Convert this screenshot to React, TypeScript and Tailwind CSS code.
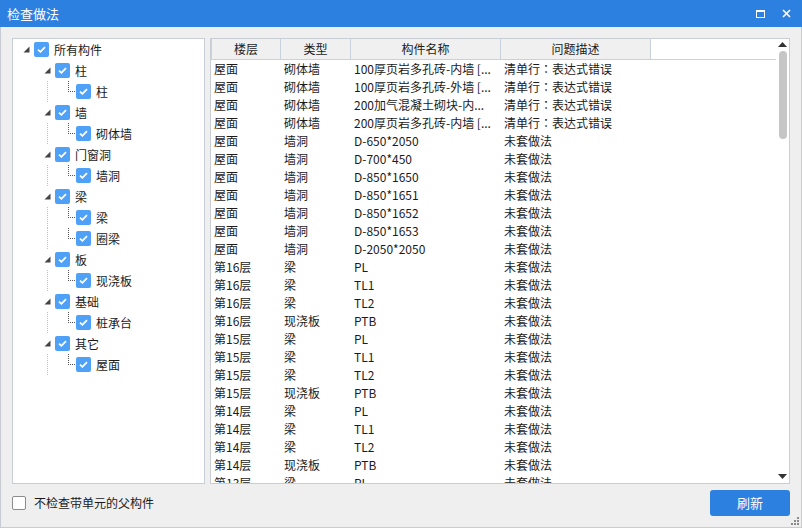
const FONT = '"Noto Sans CJK SC", "Noto Sans", sans-serif'

type Node = { label: string; children?: Node[] }

const tree: Node[] = [
  { label: '柱', children: [{ label: '柱' }] },
  { label: '墙', children: [{ label: '砌体墙' }] },
  { label: '门窗洞', children: [{ label: '墙洞' }] },
  { label: '梁', children: [{ label: '梁' }, { label: '圈梁' }] },
  { label: '板', children: [{ label: '现浇板' }] },
  { label: '基础', children: [{ label: '桩承台' }] },
  { label: '其它', children: [{ label: '屋面' }] },
]

const rows: [string, string, string, string][] = [
  ['屋面', '砌体墙', '100厚页岩多孔砖-内墙 [...', '清单行：表达式错误'],
  ['屋面', '砌体墙', '100厚页岩多孔砖-外墙 [...', '清单行：表达式错误'],
  ['屋面', '砌体墙', '200加气混凝土砌块-内...', '清单行：表达式错误'],
  ['屋面', '砌体墙', '200厚页岩多孔砖-内墙 [...', '清单行：表达式错误'],
  ['屋面', '墙洞', 'D-650*2050', '未套做法'],
  ['屋面', '墙洞', 'D-700*450', '未套做法'],
  ['屋面', '墙洞', 'D-850*1650', '未套做法'],
  ['屋面', '墙洞', 'D-850*1651', '未套做法'],
  ['屋面', '墙洞', 'D-850*1652', '未套做法'],
  ['屋面', '墙洞', 'D-850*1653', '未套做法'],
  ['屋面', '墙洞', 'D-2050*2050', '未套做法'],
  ['第16层', '梁', 'PL', '未套做法'],
  ['第16层', '梁', 'TL1', '未套做法'],
  ['第16层', '梁', 'TL2', '未套做法'],
  ['第16层', '现浇板', 'PTB', '未套做法'],
  ['第15层', '梁', 'PL', '未套做法'],
  ['第15层', '梁', 'TL1', '未套做法'],
  ['第15层', '梁', 'TL2', '未套做法'],
  ['第15层', '现浇板', 'PTB', '未套做法'],
  ['第14层', '梁', 'PL', '未套做法'],
  ['第14层', '梁', 'TL1', '未套做法'],
  ['第14层', '梁', 'TL2', '未套做法'],
  ['第14层', '现浇板', 'PTB', '未套做法'],
  ['第13层', '梁', 'PL', '未套做法'],
]

function Check() {
  return (
    <span className="flex h-[15px] w-[15px] shrink-0 items-center justify-center rounded-[2px] bg-[#4ea1f6]">
      <svg width="9" height="7" viewBox="0 0 9 7">
        <path d="M1 3.6 L3.4 5.8 L8 1.2" fill="none" stroke="white" strokeWidth="1.8" />
      </svg>
    </span>
  )
}

function Arrow() {
  return (
    <svg width="7" height="7" viewBox="0 0 7 7" className="shrink-0">
      <path d="M6.5 0.5 L6.5 6.5 L0.5 6.5 Z" fill="#444" />
    </svg>
  )
}

// full-width colon drawn centred, as the original UI font does
function Cell({ text }: { text: string }) {
  const at = text.indexOf('：')
  if (at < 0) return <>{text}</>
  return (
    <>
      {text.slice(0, at)}
      <span style={{ fontFamily: '"Noto Sans CJK TC", sans-serif' }}>：</span>
      {text.slice(at + 1)}
    </>
  )
}

function TreePanel() {
  return (
    <div className="w-[193px] overflow-hidden border border-[#c9cdd4] bg-white text-[12px] text-[#1b1b1b]">
      <div className="flex h-[21px] items-center pl-[10px]">
        <Arrow />
        <span className="ml-[4px]"><Check /></span>
        <span className="ml-[5px]">所有构件</span>
      </div>
      {tree.map((g) => (
        <div key={g.label}>
          <div className="flex h-[21px] items-center pl-[31px]">
            <Arrow />
            <span className="ml-[4px]"><Check /></span>
            <span className="ml-[5px]">{g.label}</span>
          </div>
          {g.children?.map((c, i) => (
            <div key={c.label + i} className="relative flex h-[21px] items-center pl-[63px]">
              <span className="absolute left-[34px] top-0 h-[21px] border-l border-dotted border-[#b8c0cc]" />
              <span className="absolute left-[55px] top-0 h-[11px] w-[7px] border-b border-l border-dotted border-[#555]" />
              <Check />
              <span className="ml-[5px]">{c.label}</span>
            </div>
          ))}
        </div>
      ))}
    </div>
  )
}

function TablePanel() {
  const cols = ['w-[70px]', 'w-[70px]', 'w-[150px]', 'w-[150px]']
  return (
    <div className="relative flex flex-1 overflow-hidden border border-[#c9cdd4] bg-white text-[12px] text-[#1b1b1b]">
      <div className="flex-1 overflow-hidden">
        <div className="flex h-[21px] border-b border-[#c9d1dd]">
          {['楼层', '类型', '构件名称', '问题描述'].map((h, i) => (
            <div
              key={h}
              className={`${cols[i]} flex items-center justify-center border-r border-[#c9d1dd] bg-[#f0f0f0] ${i === 0 ? 'border-l' : ''}`}
            >
              {h}
            </div>
          ))}
        </div>
        {rows.map((r, ri) => (
          <div key={ri} className="flex h-[18px] items-center">
            {r.map((c, i) => (
              <div key={i} className={`${cols[i]} truncate whitespace-nowrap pl-[3px]`}>
                <Cell text={c} />
              </div>
            ))}
          </div>
        ))}
      </div>
      <div className="flex w-[13px] flex-col items-center py-[2px]">
        <svg width="9" height="5" viewBox="0 0 9 5" className="mt-[1px]">
          <path d="M0 5 L4.5 0 L9 5 Z" fill="#333" />
        </svg>
        <div className="mt-[4px] h-[88px] w-[8px] rounded-full bg-[#c6c6c6]" />
        <div className="flex-1" />
        <svg width="9" height="5" viewBox="0 0 9 5" className="mb-[2px]">
          <path d="M0 0 L9 0 L4.5 5 Z" fill="#333" />
        </svg>
      </div>
    </div>
  )
}

export default function App() {
  return (
    <div className="flex h-[528px] w-[802px] flex-col" style={{ fontFamily: FONT }}>
      <div className="flex h-[27px] items-center justify-between bg-[#2c80e0] pl-[7px] pr-[11px] text-white">
        <span className="text-[13px]">检查做法</span>
        <div className="flex items-center gap-[17px]">
          <span className="h-[8px] w-[9px] border border-t-2 border-white" />
          <svg width="9" height="9" viewBox="0 0 9 9">
            <path d="M1 1 L8 8 M8 1 L1 8" stroke="white" strokeWidth="1.6" />
          </svg>
        </div>
      </div>
      <div className="relative flex flex-1 flex-col border-x border-b border-[#c8ccd2] bg-[#efefef] px-[11px] pt-[11px]">
        <div className="flex h-[446px] gap-[5px]">
          <TreePanel />
          <TablePanel />
        </div>
        <div className="mt-[6px] flex h-[26px] items-center justify-between">
          <label className="flex items-center gap-[8px] text-[12px] text-[#1b1b1b]">
            <span className="h-[14px] w-[14px] rounded-[2px] border border-[#8c8c8c] bg-white" />
            不检查带单元的父构件
          </label>
          <button className="h-[26px] w-[80px] rounded-[3px] bg-[#2c80e0] text-[13px] text-white">刷新</button>
        </div>
        <svg width="8" height="8" viewBox="0 0 8 8" className="absolute bottom-[2px] right-[2px]">
          <g fill="#8a8a8a">
            <rect x="6" y="0" width="2" height="2" />
            <rect x="3" y="3" width="2" height="2" />
            <rect x="6" y="3" width="2" height="2" />
            <rect x="0" y="6" width="2" height="2" />
            <rect x="3" y="6" width="2" height="2" />
            <rect x="6" y="6" width="2" height="2" />
          </g>
        </svg>
      </div>
    </div>
  )
}
